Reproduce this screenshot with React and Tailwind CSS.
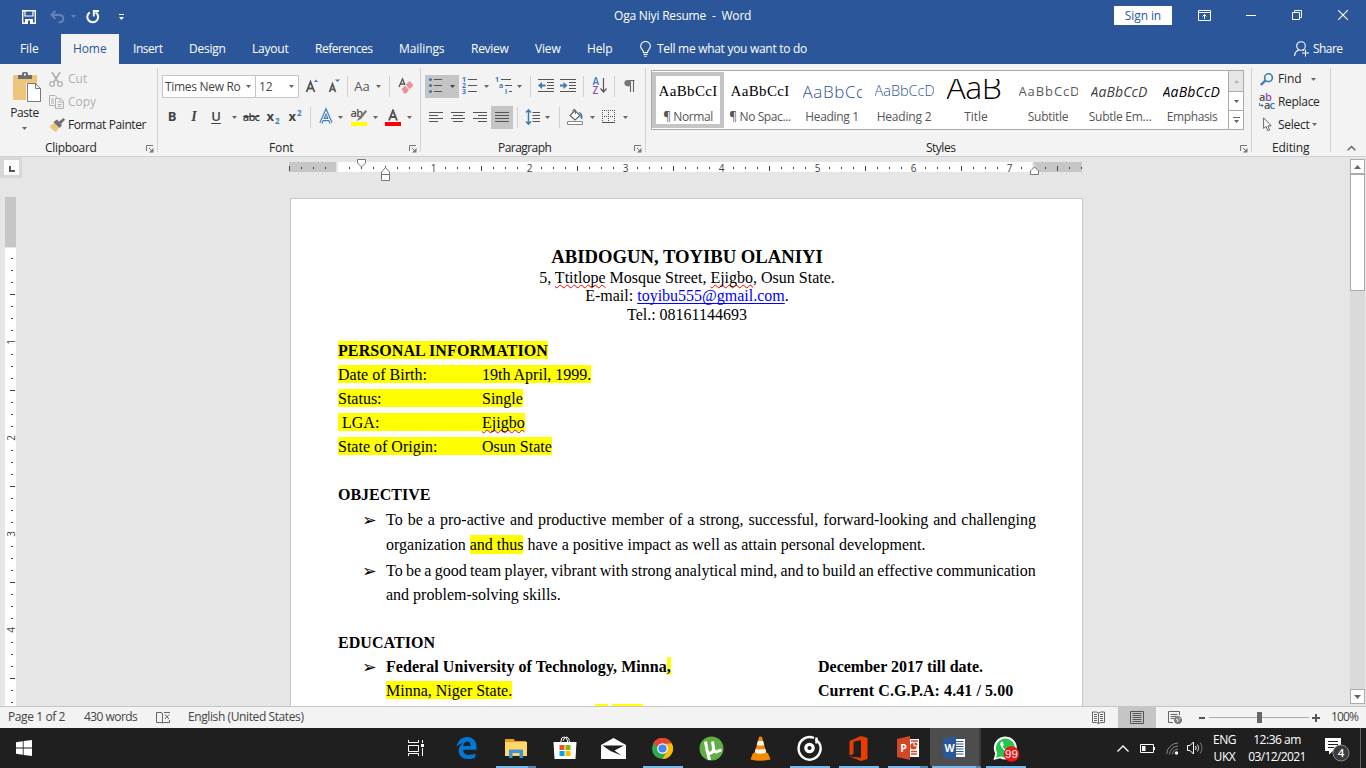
import React from "react";

const Caret = ({ c = "#666" }) => (
  <svg width="5" height="3" viewBox="0 0 5 3" className="shrink-0"><path d="M0 0H5L2.5 3Z" fill={c} /></svg>
);

const Cell = ({ className = "", children }) => (
  <div className={`flex h-full shrink-0 items-center justify-center whitespace-nowrap ${className}`}>{children}</div>
);

const Bar = ({ className }) => (
  <Cell className={className}><div className="h-[21px] w-px bg-[#d0d0d0]" /></Cell>
);

const Lines = ({ rows }) => (
  <svg width="14" height="23" className="shrink-0">
    {rows.map(([x, w], i) => <rect key={i} x={x} y={6 + i * 3} width={w} height="1" fill="#555" />)}
  </svg>
);

const Group = ({ label, className, labelClass, launcher, children }) => (
  <div className={`relative flex h-[84px] shrink-0 flex-col border-r border-[#d2d2d2] ${className}`}>
    {children}
    <div className="mt-auto flex h-[8px] items-center text-[#262626]">
      <span className={`whitespace-nowrap ${labelClass}`}>{label}</span>
    </div>
    {launcher && (
      <svg width="8" height="8" viewBox="0 0 8 8" className={`absolute -bottom-px ${launcher}`} fill="none">
        <path d="M.5 6V.5H7" stroke="#777" />
        <path d="M2.8 2.8L5.5 5.5" stroke="#777" />
        <path d="M7.5 3V7.5H3Z" fill="#777" />
      </svg>
    )}
  </div>
);

const TitleBar = () => (
  <div className="flex h-[34px] items-start text-white">
    <div className="flex h-8 w-[614px] items-center pl-[22px]">
      <svg width="14" height="14" viewBox="0 0 14 14" fill="none" stroke="#fff" strokeWidth="1.4" className="mt-[2px]">
        <path d="M.7.7H13.3V13.3H.7Z" /><path d="M3 1V6H11V1" strokeWidth="1.2" /><path d="M3 13.5V9H11V13.5" fill="#fff" stroke="none" /><path d="M6 10.5H8V14H6Z" fill="#2b579a" stroke="none" />
      </svg>
      <svg width="16" height="14" viewBox="0 0 16 14" fill="none" stroke="#6583b7" strokeWidth="2" className="ml-[14px] mt-[2px]">
        <path d="M5.5 1L1.5 5L5.5 9" /><path d="M2 5H9C12 5 13.3 6.7 13.3 9C13.3 11.3 11.5 12.4 8.5 12.4" />
      </svg>
      <div className="ml-[5px]"><Caret c="#6583b7" /></div>
      <svg width="14" height="14" viewBox="0 0 14 14" fill="none" stroke="#fff" strokeWidth="2" className="ml-[10px] mt-[2px]">
        <path d="M3.8 2.4A5.4 5.4 0 1 0 9.500 2.300" /><path d="M13 1H7.800V6.500" strokeWidth="1.900" />
      </svg>
      <svg width="5" height="7" viewBox="0 0 5 7" fill="#fff" className="ml-[19px] mt-[2px]"><path d="M0 0H5V1H0ZM0 3H5L2.5 6Z" /></svg>
    </div>
    <div className="h-8 w-[500px] whitespace-pre leading-[32px] tracking-[-0.19px]">Oga Niyi Resume  -  Word</div>
    <div className="mt-[6px] h-[19px] w-[58px] bg-white text-center leading-[19px] tracking-[-0.1px] text-[#2b579a]">Sign in</div>
    <svg width="13" height="11" viewBox="0 0 13 11" fill="none" stroke="#fff" className="ml-[26px] mt-[10px]">
      <path d="M.5.5H12.5V10.5H.5ZM.5 2.5H12.5M6.5 9V4.5M4.5 6.5L6.5 4.5L8.5 6.5" />
    </svg>
    <svg width="10" height="1" className="ml-[35px] mt-[15px]"><rect width="10" height="1" fill="#fff" /></svg>
    <svg width="10" height="10" viewBox="0 0 10 10" fill="none" stroke="#fff" className="ml-[36px] mt-[10px]"><path d="M.5 2.5H7.5V9.5H.5ZM2.5 2.5V.5H9.5V7.5H7.5" /></svg>
    <svg width="10" height="10" viewBox="0 0 10 10" fill="none" stroke="#fff" strokeWidth="1.1" className="ml-[36px] mt-[10px]"><path d="M0 0L10 10M10 0L0 10" /></svg>
  </div>
);

const TabRow = () => (
  <div className="flex h-[30px] items-center whitespace-nowrap leading-[30px] text-white">
    <div className="w-[61px] pl-[20px] tracking-[-0.12px]">File</div>
    <div className="h-full w-[58px] bg-[#f3f3f3] pl-[12px] tracking-[-0.1px] text-[#2b579a]">Home</div>
    <div className="w-[70px] pl-[14px] tracking-[-0.45px]">Insert</div>
    <div className="w-[63px] tracking-[-0.26px]">Design</div>
    <div className="w-[63px] tracking-[-0.22px]">Layout</div>
    <div className="w-[84px] tracking-[-0.46px]">References</div>
    <div className="w-[72px] tracking-[-0.08px]">Mailings</div>
    <div className="w-[64px] tracking-[-0.28px]">Review</div>
    <div className="w-[52px] tracking-[-0.18px]">View</div>
    <div className="w-[53px] tracking-[-0.11px]">Help</div>
    <svg width="11" height="16" viewBox="0 0 11 16" fill="none" stroke="#fff" strokeWidth="1.1">
      <path d="M3.5 11.5C3.5 8.5.6 8.2.6 5.2A4.9 4.7 0 0 1 10.4 5.2C10.4 8.2 7.5 8.5 7.5 11.5ZM3.5 13.4H7.5M4.3 15.3H6.7" />
    </svg>
    <div className="ml-[6px] w-[637px] tracking-[-0.29px]">Tell me what you want to do</div>
    <svg width="15" height="16" viewBox="0 0 15 16" fill="none" stroke="#fff" strokeWidth="1.1">
      <circle cx="7" cy="5" r="4.3" /><path d="M.6 15C.6 12 2.2 10 4.8 9M9 9L10 9.6M11.5 8.5V15.5M8 12H15" />
    </svg>
    <div className="ml-[4px] tracking-[-0.55px]">Share</div>
  </div>
);

const Clipboard = () => (
  <Group label="Clipboard" className="w-[158px]" labelClass="pl-[45px] tracking-[-0.33px]" launcher="left-[146px]">
    <div className="flex h-[68px]">
      <div className="flex w-[49px] flex-col items-center pt-[4px] text-[#262626]">
        <svg width="29" height="30" viewBox="0 0 29 30" className="ml-[5px]">
          <rect y="3" width="24" height="25" rx="1" fill="#ecc47c" />
          <path d="M5 3H9V1.5Q9 0 10.5 0H13.5Q15 0 15 1.5V3H19V7H5Z" fill="#6d6d6d" /><rect x="11" y="1.5" width="2" height="2" fill="#f3f3f3" />
          <path d="M13 11H22L29 17V30H13Z" fill="#f3f3f3" /><path d="M14.5 11.5H22.5L27.5 16.5V29.5H14.5ZM22.5 11.5V16.5H27.5" fill="#fff" stroke="#777" />
        </svg>
        <span className="mt-[3px] tracking-[-0.42px]">Paste</span>
        <div className="mt-[6px]"><Caret /></div>
      </div>
      <div className="flex flex-col whitespace-nowrap">
        <div className="flex h-[23px] items-center text-[#b1b1b1]">
          <svg width="14" height="15" viewBox="0 0 14 15" fill="none" stroke="#b1b1b1" strokeWidth="1.3"><path d="M3 0L9 10M11 0L5 10" strokeWidth="1.8" /><circle cx="3" cy="12" r="2.3" /><circle cx="11" cy="12" r="2.3" /></svg>
          <span className="ml-[5px]">Cut</span>
        </div>
        <div className="flex h-[23px] items-center text-[#b1b1b1]">
          <svg width="15" height="14" viewBox="0 0 15 14" fill="#f3f3f3" stroke="#b1b1b1"><path d="M.5.5H6L8.5 3V10.5H.5Z" /><path d="M2 4H5M2 6H5M2 8H5" /><path d="M6.5 3.5H11.5L14.5 6.5V13.5H6.5ZM11 3.5V7H14.5M8.5 7H10M8.5 9.5H12.5M8.5 11.5H12.5" /></svg>
          <span className="ml-[4px]">Copy</span>
        </div>
        <div className="flex h-[23px] items-center text-[#262626]">
          <svg width="16" height="14" viewBox="0 0 16 14"><path d="M.5 8.5L5.5 4.5L10 9.5L7 14Q3.5 12.5.5 8.5Z" fill="#ecc47c" /><path d="M4.5 4L8 1.5L13 7L10.5 10Z" fill="#6d6d6d" /><path d="M9.5 4L14.5 0L16 1.8L12 6Z" fill="#6d6d6d" /></svg>
          <span className="ml-[3px] tracking-[-0.4px]">Format Painter</span>
        </div>
      </div>
    </div>
  </Group>
);

const Font = () => (
  <Group label="Font" className="w-[263px]" labelClass="pl-[111px] tracking-[-0.14px]" launcher="left-[251px]">
    <div className="mt-[7px] flex h-[23px] items-center pl-[4px] text-[#444]">
      <div className="flex h-[23px] w-[94px] items-center justify-between whitespace-nowrap border border-[#c6c6c6] bg-white pl-[2px] pr-[4px]"><span className="tracking-[-0.3px]">Times New Ro</span><Caret /></div>
      <div className="flex h-[23px] w-[43px] items-center justify-between border border-l-0 border-[#c6c6c6] bg-white pl-[3px] pr-[4px]"><span>12</span><Caret /></div>
      <Cell className="w-[24px]"><svg width="24" height="23"><path d="M7.5 17L11.5 7L15.5 17M9 13.5H14" stroke="#555" strokeWidth="1.8" fill="none" /><path d="M15 7H19L17 4.5Z" fill="#3f7ab5" /></svg></Cell>
      <Cell className="w-[22px]"><svg width="22" height="23"><path d="M6.5 17L9.5 9L12.5 17M7.5 14.5H11.5" stroke="#555" strokeWidth="1.7" fill="none" /><path d="M12 4.5H17L14.5 7Z" fill="#3f7ab5" /></svg></Cell>
      <Bar className="w-[5px]" />
      <Cell className="w-[24px] pb-[2px] text-[13px] text-[#555]">Aa</Cell>
      <Cell className="w-[8px]"><Caret /></Cell>
      <Bar className="w-[15px]" />
      <Cell className="w-[17px]"><svg width="17" height="23"><path d="M2 12L5.5 4L8 10M3.5 9H7" stroke="#555" strokeWidth="1.3" fill="none" /><path d="M4.5 14L8 10.5L12 15L9 18.5H7Z" fill="#e8919f" /><path d="M8.7 9.8L12.5 6L16 9.5V11L12.6 14.3Z" fill="#e8919f" /></svg></Cell>
    </div>
    <div className="mt-[8px] flex h-[23px] items-center pl-[3px] text-[#444]">
      <Cell className="w-[22px] pb-[3px] text-[13px] font-bold">B</Cell>
      <Cell className="w-[22px] pb-[2px] font-['Liberation_Serif'] text-[14px] font-bold italic">I</Cell>
      <Cell className="w-[22px] pb-[3px] text-[13px] font-semibold underline underline-offset-2">U</Cell>
      <Cell className="w-[14px]"><Caret /></Cell>
      <Cell className="w-[20px] pb-[2px] text-[11px] font-semibold tracking-[-0.8px] line-through">abc</Cell>
      <Cell className="w-[24px] pb-[3px] text-[13px] font-bold"><span>x</span><span className="ml-px mt-[9px] text-[8px] text-[#3f7ab5]">2</span></Cell>
      <Cell className="w-[20px] pb-[3px] text-[13px] font-bold"><span>x</span><span className="mb-[6px] ml-px text-[8px] text-[#3f7ab5]">2</span></Cell>
      <Bar className="w-[11px]" />
      <Cell className="w-[20px]"><svg width="20" height="23"><path d="M5 17L10 5.5L15 17M7 13.5H13" stroke="#9cc0e4" strokeWidth="4" fill="none" /><path d="M5 17L10 5.5L15 17M7 13.5H13" stroke="#3f7ab5" strokeWidth="2.8" fill="none" /><path d="M5 17L10 5.5L15 17M7 13.5H13" stroke="#fff" strokeWidth="1" fill="none" /></svg></Cell>
      <Cell className="w-[8px]"><Caret /></Cell>
      <Cell className="w-[29px]">
        <div className="flex h-[17px] w-[16px] flex-col">
          <svg width="16" height="13" className="overflow-visible"><text x="-.5" y="8" fontSize="11" fontWeight="600" letterSpacing="-.6" fill="#555">ab</text><path d="M14.5 1L8 8.5L5.5 12L10 10L16 2.5Z" fill="#777" /></svg>
          <div className="h-[4px] bg-[#ff0]" />
        </div>
      </Cell>
      <Cell className="w-[5px]"><Caret /></Cell>
      <Cell className="w-[29px]">
        <div className="flex h-[17px] w-[16px] flex-col">
          <svg width="16" height="13"><path d="M4 11.5L8 1.5L12 11.500M5.500 8H10.500" stroke="#555" strokeWidth="1.9" fill="none" /></svg>
          <div className="h-[4px] bg-[#f00]" />
        </div>
      </Cell>
      <Cell className="w-[5px]"><Caret /></Cell>
    </div>
  </Group>
);

const Paragraph = () => (
  <Group label="Paragraph" className="w-[225px]" labelClass="pl-[77px] tracking-[-0.55px]" launcher="left-[213px]">
    <div className="mt-[7px] flex h-[23px] items-center pl-[4px]">
      <div className="flex h-[23px] w-[34px] bg-[#c5c5c5]">
        <svg width="20" height="23" fill="#3f7ab5"><circle cx="5.5" cy="4.5" r="1.6" /><circle cx="5.5" cy="10.5" r="1.6" /><circle cx="5.5" cy="16.5" r="1.6" /><path d="M9 4H17V5H9ZM9 10H17V11H9ZM9 16H17V17H9Z" fill="#555" /></svg>
        <Cell className="w-[14px]"><Caret c="#444" /></Cell>
      </div>
      <svg width="21" height="23" className="shrink-0" fill="#3f7ab5" fontSize="7" fontWeight="bold"><text x="3" y="7">1</text><text x="3" y="13">2</text><text x="3" y="19">3</text><path d="M9 4H18V5H9ZM9 10H18V11H9ZM9 16H18V17H9Z" fill="#555" /></svg>
      <Cell className="w-[12px]"><Caret /></Cell>
      <svg width="23" height="23" className="shrink-0" fill="#3f7ab5" fontSize="7" fontWeight="bold"><text x="3" y="7">1</text><text x="7" y="13">a</text><text x="13" y="19">i</text><path d="M9 4H19V5H9ZM13 10H20V11H13ZM17 16H20V17H17Z" fill="#555" /></svg>
      <Cell className="w-[8px]"><Caret /></Cell>
      <Bar className="w-[14px]" />
      <svg width="20" height="23" className="shrink-0" fill="#555"><path d="M1 4H17V5H1ZM10 7H17V8H10ZM10 10H17V11H10ZM10 13H17V14H10ZM1 16H17V17H1Z" /><path d="M1 10.5L5 7V9.5H8.5V11.5H5V14Z" fill="#3f7ab5" /></svg>
      <svg width="24" height="23" className="shrink-0" fill="#555"><path d="M3 4H19V5H3ZM12 7H19V8H12ZM12 10H19V11H12ZM12 13H19V14H12ZM3 16H19V17H3Z" /><path d="M10.5 10.5L6.5 7V9.5H3V11.5H6.5V14Z" fill="#3f7ab5" /></svg>
      <Bar className="w-[5px]" />
      <svg width="27" height="23" className="shrink-0" fill="none"><text x="6.5" y="10" fontSize="10" fontWeight="600" fill="#3f7ab5">A</text><text x="6.5" y="19" fontSize="10" fontWeight="600" fill="#8a4fb0">Z</text><path d="M17.5 3V17M14.5 13.5L17.5 17L20.5 13.5" stroke="#555" strokeWidth="1.2" /></svg>
      <Bar className="w-[3px]" />
      <svg width="27" height="23" className="shrink-0"><path d="M17.500 5V17M14.500 5V17M11.500 5.500H18.500" stroke="#666" strokeWidth="1.100" /><path d="M15 5H11.500A3.100 3.100 0 0 0 11.500 11.200H15Z" fill="#777" /></svg>
    </div>
    <div className="mt-[8px] flex h-[23px] items-center pl-[4px]">
      <Cell className="w-[22px]"><Lines rows={[[0, 14], [0, 9], [0, 14], [0, 9]]} /></Cell>
      <Cell className="w-[22px]"><Lines rows={[[0, 14], [2, 10], [0, 14], [2, 10]]} /></Cell>
      <Cell className="w-[22px]"><Lines rows={[[0, 14], [5, 9], [0, 14], [5, 9]]} /></Cell>
      <Cell className="w-[22px] bg-[#c5c5c5]"><Lines rows={[[0, 14], [0, 14], [0, 14], [0, 14]]} /></Cell>
      <Bar className="w-[9px]" />
      <svg width="22" height="23" className="shrink-0" fill="none"><path d="M6.5 4V18M4 6.5L6.5 3.8L9 6.5M4 15.5L6.5 18.2L9 15.5" stroke="#3f7ab5" strokeWidth="1.5" /><path d="M10.5 6.5H18M10.5 9.5H18M10.5 12.5H18M10.5 15.5H18" stroke="#555" /></svg>
      <Cell className="w-[7px]"><Caret /></Cell>
      <Bar className="w-[16px]" />
      <svg width="17" height="23" className="shrink-0" fill="none"><path d="M3 9.5L8 4.5L13 9.5L8 14Z" fill="#fff" stroke="#666" strokeWidth="1.2" /><path d="M6 7V4Q7 2.5 8.5 4V8" stroke="#666" /><path d="M11.5 6Q16 6.5 15.5 12Q14.5 14 13.5 12V9Z" fill="#3f7ab5" /><path d="M.5 15.5H15.5V18.5H.5Z" fill="#fff" stroke="#888" /></svg>
      <Cell className="w-[16px]"><Caret /></Cell>
      <svg width="17" height="23" className="shrink-0" fill="none" stroke="#555"><path d="M2 4.5H15M2.5 4V16M8.5 4V16M14.5 4V16M2 10.5H15" strokeDasharray="1 1" /><path d="M2 16.5H15" /></svg>
      <Cell className="w-[17px]"><Caret /></Cell>
    </div>
  </Group>
);

const styles = [
  ["¶ Normal", "font-['Liberation_Serif'] text-[15px] text-black tracking-[0.35px]", "tracking-[-0.43px]"],
  ["¶ No Spac...", "font-['Liberation_Serif'] text-[15px] text-black tracking-[0.35px]", "tracking-[-0.4px]"],
  ["Heading 1", "text-[17px] font-light text-[#2f5496] tracking-[0.6px]", "tracking-[-0.33px]", "AaBbCc"],
  ["Heading 2", "text-[14.5px] font-light text-[#2f5496]", "tracking-[-0.2px]", "AaBbCcD"],
  ["Title", "mb-[10px] text-[32px] font-light text-black tracking-[-0.4px]", "", "AaB"],
  ["Subtitle", "text-[13px] text-[#5a5a5a] tracking-[0.9px]", "tracking-[-0.27px]", "AaBbCcD"],
  ["Subtle Em...", "text-[14px] italic text-[#404040] tracking-[0.1px]", "tracking-[-0.26px]", "AaBbCcD"],
  ["Emphasis", "text-[14px] italic text-black tracking-[0.2px]", "tracking-[-0.39px]", "AaBbCcD"],
];

const Styles = () => (
  <Group label="Styles" className="w-[606px]" labelClass="pl-[280px] tracking-[-0.5px]" launcher="left-[594px]">
    <div className="ml-[5px] mt-[2px] flex h-[60px] w-[593px] border border-[#ababab] bg-white">
      {styles.map(([name, cls, track, sample = "AaBbCcI"], i) => (
        <div key={name} className={`flex h-[56px] w-[72px] shrink-0 flex-col items-center self-center border-4 ${i ? "border-transparent" : "border-[#c5c5c5]"}`}>
          <div className="mt-[3px] flex h-[23px] w-[59px] shrink-0 items-center overflow-hidden pt-[2px]">
            <span className={`whitespace-nowrap leading-none ${cls}`}>{sample}</span>
          </div>
          <span className={`mt-[8px] whitespace-nowrap leading-[14px] text-[#555] ${track}`}>{name}</span>
        </div>
      ))}
      <div className="flex w-[15px] flex-col border-l border-[#ababab]">
        <div className="flex h-[20px] items-center justify-center bg-[#e6e6e6]"><svg width="5" height="3"><path d="M0 3H5L2.5 0Z" fill="#b5b5b5" /></svg></div>
        <div className="flex h-[20px] items-center justify-center border-y border-[#ababab]"><Caret /></div>
        <div className="flex h-[18px] items-center justify-center"><svg width="7" height="6"><path d="M0 0H7V1H0ZM1 3H6L3.5 6Z" fill="#666" /></svg></div>
      </div>
    </div>
  </Group>
);

const Editing = () => (
  <Group label="Editing" className="w-[79px]" labelClass="pl-[20px] tracking-[-0.12px]">
    <div className="flex h-[68px] flex-col text-[#262626]">
      <div className="flex h-[23px] items-center pl-[8px]">
        <svg width="14" height="13" viewBox="0 0 14 13" fill="none" stroke="#3f7ab5"><circle cx="8.5" cy="4.7" r="3.9" strokeWidth="1.6" /><path d="M5.5 7.5L.8 12" strokeWidth="2.4" /></svg>
        <span className="ml-[4px] mr-[10px] tracking-[-0.11px]">Find</span><Caret />
      </div>
      <div className="flex h-[23px] items-center pl-[7px]">
        <svg width="16" height="16" className="overflow-visible" fontSize="11" fontWeight="600" letterSpacing="-.5"><text x="0" y="7" fill="#555">a</text><text x="6" y="7" fill="#8a4fb0">b</text><text x="5" y="14.5" fill="#555">a</text><text x="10.5" y="14.5" fill="#3f7ab5">c</text><path d="M.5 9V11.5H4M2.5 10L4 11.5L2.5 13" fill="none" stroke="#3f7ab5" /></svg>
        <span className="ml-[3px] tracking-[-0.31px]">Replace</span>
      </div>
      <div className="flex h-[23px] items-center pl-[11px]">
        <svg width="9" height="15" viewBox="0 0 9 15" fill="#fff" stroke="#666"><path d="M.6.8V11.5L3 9.3L4.8 13.7L6.6 13L4.9 8.8H8.2Z" /></svg>
        <span className="ml-[6px] mr-[2px] tracking-[-0.27px]">Select</span><Caret />
      </div>
    </div>
  </Group>
);

const hTicks = Array.from({ length: 67 }, (_, i) => i - 4);

const HorizontalRuler = () => (
  <svg width="794" height="24" className="ml-[267px]" fontSize="10" textAnchor="middle" fill="#444">
    <rect x="0" y="5" width="47" height="10" fill="#c6c6c6" />
    <rect x="49" y="5" width="694" height="10" fill="#fff" />
    <rect x="745" y="5" width="48" height="10" fill="#c6c6c6" />
    {hTicks.map((i) => {
      const x = 48 + i * 12;
      if (i === 0 || i === 58 || x > 793) return null;
      if (i > 0 && i % 8 === 0) return <text key={i} x={x + 0.5} y="14.500">{i / 8}</text>;
      return i % 4 === 0 ? <rect key={i} x={x} y="9" width="1" height="5" /> : <rect key={i} x={x} y="10" width="1" height="2" />;
    })}
    <g fill="#fff" stroke="#777">
      <path d="M68.500 2.500H76.500V6L72.500 10L68.500 6Z" />
      <path d="M92.500 23.500V15L96.500 10.500L100.500 15V23.500ZM92.500 17.500H100.500" />
      <path d="M741.500 17.500V14L745.500 10L749.500 14V17.500Z" />
    </g>
  </svg>
);

const vTicks = Array.from({ length: 38 }, (_, i) => i + 1);

const VerticalRuler = () => (
  <svg width="11" height="509" className="ml-[5px] shrink-0" fontSize="10" textAnchor="middle" fill="#444">
    <rect width="11" height="50" fill="#c6c6c6" />
    <rect y="51" width="11" height="458" fill="#fff" />
    {vTicks.map((i) => {
      const y = 49 + i * 12;
      if (i % 8 === 0) return <text key={i} transform={`translate(10 ${y}) rotate(-90)`}>{i / 8}</text>;
      return i % 4 === 0 ? <rect key={i} x="5" y={y} width="5" height="1" /> : <rect key={i} x="6" y={y} width="2" height="1" />;
    })}
  </svg>
);

const Hl = ({ children, className = "" }) => <span className={`bg-[#ff0] pt-px ${className}`}>{children}</span>;
const Sp = ({ children }) => <span className="underline decoration-[#f00] decoration-wavy decoration-[1px] underline-offset-[1px] [text-decoration-skip-ink:none]">{children}</span>;
const Info = ({ k, children }) => (
  <div><Hl className="inline-block w-[144px] whitespace-pre leading-[17px]">{k}</Hl><Hl className="inline-block leading-[17px]">{children}</Hl></div>
);
const Arrow = ({ className = "" }) => <span className={`w-[48px] shrink-0 pl-[24px] font-['DejaVu_Sans'] text-[17.500px] ${className}`}>➢</span>;

const Page = () => (
  <div className="mt-[18px] h-[520px] w-[793px] overflow-hidden border border-b-0 border-[#c6c6c6] bg-white pl-[47px] pt-[47px] font-['Liberation_Serif'] text-[16px] leading-[24px] text-black">
    <div className="w-[698px] whitespace-nowrap">
      <div className="h-[23px] text-center text-[18.67px] font-bold leading-[22px]">ABIDOGUN, TOYIBU OLANIYI</div>
      <div className="text-center leading-[18px]">5, <Sp>Ttitlope</Sp> Mosque Street, <Sp>Ejigbo</Sp>, Osun State.</div>
      <div className="text-center leading-[18px]">E-mail: <span className="text-[#00f] underline underline-offset-2 [text-decoration-skip-ink:none]">toyibu555@gmail.com</span>.</div>
      <div className="mt-px text-center leading-[18px]">Tel.: 08161144693</div>
      <div className="mt-[15px] font-bold tracking-[0.09px]"><Hl>PERSONAL INFORMATION</Hl></div>
      <Info k="Date of Birth:">19th April, 1999.</Info>
      <Info k="Status:">Single</Info>
      <Info k=" LGA:"><Sp>Ejigbo</Sp></Info>
      <Info k="State of Origin:">Osun State</Info>
      <div className="mt-[24px] font-bold">OBJECTIVE</div>
      <div className="mt-px flex"><Arrow /><div className="w-[650px] [text-align-last:justify]">To be a pro-active and productive member of a strong, successful, forward-looking and challenging</div></div>
      <div className="mt-px pl-[48px]">organization <Hl className="pb-px">and thus</Hl> have a positive impact as well as attain personal development.</div>
      <div className="mt-[2px] flex"><Arrow /><div className="w-[650px] [word-spacing:-0.7px]">To be a good team player, vibrant with strong analytical mind, and to build an effective communication</div></div>
      <div className="pl-[48px]">and problem-solving skills.</div>
      <div className="mt-[24px] font-bold tracking-[0.05px]">EDUCATION</div>
      <div className="flex font-bold"><Arrow className="font-normal" /><div className="w-[432px] tracking-[0.055px]">Federal University of Technology, Minna<Hl>,</Hl></div><div>December 2017 till date.</div></div>
      <div className="flex pl-[48px]"><div className="w-[432px]"><Hl>Minna, Niger State.</Hl></div><div className="font-bold tracking-[0.07px]">Current C.G.P.A: 4.41 / 5.00</div></div>
      <div className="flex gap-[4px] pl-[257px] pt-px"><div className="h-[18px] w-[13px] bg-[#ff0]" /><div className="h-[18px] w-[31px] bg-[#ff0]" /></div>
    </div>
  </div>
);

const Workspace = () => (
  <div className="flex h-[549px] bg-[#e6e6e6]">
    <div className="flex w-[22px] shrink-0 flex-col">
      <div className="flex h-[21px] w-[22px] items-center justify-center bg-[#d8d8d8]">
        <div className="h-[15px] w-[15px] bg-[#fdfdfd] pl-[5px] pt-[6px]"><div className="h-[6px] w-[6px] border-b-2 border-l-2 border-[#555]" /></div>
      </div>
      <div className="mt-[19px]"><VerticalRuler /></div>
    </div>
    <div className="flex w-[1328px] flex-col overflow-hidden">
      <div className="h-[23px] shrink-0"><HorizontalRuler /></div>
      <div className="ml-[268px]"><Page /></div>
    </div>
    <div className="flex w-[15px] flex-col py-[2px]">
      <Cell className="h-[15px]! w-[15px] border border-[#ababab] bg-white"><svg width="7" height="4"><path d="M0 4H7L3.500 0Z" fill="#666" /></svg></Cell>
      <div className="h-[117px] border border-[#ababab] bg-white" />
      <div className="grow bg-[#dadada]" />
      <Cell className="h-[15px]! w-[15px] border border-[#ababab] bg-white"><svg width="7" height="4"><path d="M0 0H7L3.500 4Z" fill="#666" /></svg></Cell>
    </div>
  </div>
);

const StatusBar = () => (
  <div className="flex h-[22px] items-center whitespace-nowrap border-t border-[#c6c6c6] bg-[#f3f3f3] text-[#444]">
    <div className="w-[76px] pl-[8px] pb-[2px] tracking-[-0.4px]">Page 1 of 2</div>
    <div className="ml-[8px] w-[72px] pb-[2px] tracking-[-0.55px]">430 words</div>
    <svg width="15" height="13" viewBox="0 0 15 13" fill="none" stroke="#666"><path d="M8 1.500H14M.5 1.500H5Q6.500 1.500 6.500 3V12Q6 11.500 5 11.500H.5ZM6.500 12Q7 11.500 9 11.500H13.500V9M9 3.500L13 8M13 3.500L9 8" /></svg>
    <div className="ml-[17px] w-[904px] pb-[2px] tracking-[-0.4px]">English (United States)</div>
    <svg width="13" height="13" viewBox="0 0 13 13" fill="none" stroke="#666"><path d="M6.500 2V12.500M6.500 2Q5 .5 .5 1V11.500Q5 11 6.500 12.500Q8 11 12.500 11.500V1Q8 .5 6.500 2M2 3.500H5M2 5.500H5M2 7.500H5M2 9.500H5M8 3.500H11M8 5.500H11M8 7.500H11M8 9.500H11" /></svg>
    <div className="ml-[13px] flex h-full w-[38px] items-center justify-center bg-[#c5c5c5]"><svg width="14" height="13" fill="none" stroke="#555"><path d="M.5.5H13.500V12.500H.5ZM2.500 2.500H11.500M2.500 4.500H11.500M2.500 6.500H11.500M2.500 8.500H11.500M2.500 10.500H11.500" /></svg></div>
    <svg width="14" height="13" viewBox="0 0 14 13" fill="none" stroke="#666" className="ml-[12px]"><path d="M11.500 4V.5H.5V11.500H5M2.500 3.500H9.500M2.500 5.500H8M2.500 7.500H6" /><circle cx="10" cy="9" r="3.500" fill="#888" /><path d="M8 8L10 9L9.500 11M11 6.500L12.500 8" stroke="#f3f3f3" /></svg>
    <div className="ml-[17px] h-[2px] w-[6px] bg-[#555]" />
    <div className="ml-[4px] flex h-full w-[100px] items-center">
      <div className="h-px w-[48px] bg-[#ababab]" /><div className="h-[11px] w-[5px] bg-[#666]" /><div className="h-px grow bg-[#ababab]" />
    </div>
    <svg width="8" height="8" className="ml-[3px]"><path d="M4 0V8M0 4H8" stroke="#555" strokeWidth="2" /></svg>
    <div className="ml-[11px] pb-[2px] tracking-[-0.9px]">100%</div>
  </div>
);

const Task = ({ active, bar, children }) => (
  <div className={`flex h-[40px] w-[49px] shrink-0 flex-col items-center ${active ? "bg-[#3a3a3a]" : ""}`}>
    <div className={`flex h-[38px] w-full items-center justify-center pt-[2px] ${active ? "mr-[5px] w-[44px] bg-[#4d4d4d]" : ""}`}>{children}</div>
    <div className="flex h-[2px]">
      {bar && <div className={`h-[2px] bg-[#76b9ed] ${bar === "multi" ? "w-[32px]" : active ? "w-[44px]" : "w-[40px]"}`} />}
      {(bar === "multi" || active) && <div className={`h-[2px] bg-[#5586ad] ${active ? "w-[5px]" : "w-[8px]"}`} />}
    </div>
  </div>
);

const OfficeDoc = ({ color, letter, children }) => (
  <svg width="24" height="24" viewBox="0 0 24 24">
    <path d="M12 3H23V21H12Z" fill="#fff" />{children}
    <path d="M1 3L14 0V24L1 21Z" fill={color} />
    <text x="7.5" y="15.800" fontSize="10.500" fontWeight="700" textAnchor="middle" fill="#fff">{letter}</text>
  </svg>
);

const Taskbar = () => (
  <div className="flex h-[40px] bg-[#1f1f1f] text-white">
    <div className="flex w-[392px] items-center pl-[16px]">
      <svg width="16" height="16" fill="#fff"><path d="M0 2.200L6.800 1.200V7.500H0ZM7.600 1.100L16 0V7.500H7.600ZM0 8.500H6.800V14.800L0 13.800ZM7.600 8.500H16V16L7.600 14.900Z" /></svg>
    </div>
    <div className="flex w-[50px] items-center pl-[16px]">
      <svg width="16" height="16" fill="none" stroke="#fff"><path d="M.5 0V2.500H10.500V0M.5 5.500H10.500V11.500H.5ZM.5 16V13.500H10.500V16M14.500 0V3M14.500 8V16" /><rect x="13" y="4" width="3" height="3" fill="#fff" stroke="none" /></svg>
    </div>
    <Task><svg width="21" height="22" viewBox="0 0 21 22"><path d="M.5 10C1.500 3.500 6 0 11 0C17 0 20.500 4.500 20.500 10V12.800H7C7.200 16.500 10 18 13 18C15.500 18 17.500 17.300 19.300 16.300V20.500C17 21.600 14.700 22 12.300 22C6.500 22 2.600 18.700 2.600 13.500C2.600 10.300 4.300 7.600 7.300 6.200C5 6.200 2.300 7.300.5 10ZM7.200 8.900H14.700C14.700 6.200 13.500 4.600 11.300 4.600C9 4.600 7.600 6.300 7.200 8.900Z" fill="#0078d7" fillRule="evenodd" /></svg></Task>
    <Task bar="multi"><svg width="22" height="20" viewBox="0 0 22 20"><path d="M0 1H9L10 3H21V18H0Z" fill="#e6a117" /><path d="M0 4H22V18H0Z" fill="#ffd766" /><path d="M4 11.500H18V20H14.500V15H7.500V20H4Z" fill="#3d92d8" /></svg></Task>
    <Task><svg width="24" height="24" viewBox="0 0 24 24" fill="none"><path d="M8 8V5Q8 1 11 1Q14 1 14.500 5V8M10 5Q11 1 14 1Q16.500 2 16.500 7" stroke="#fff" /><path d="M.5 6H23.500L22.500 23H1.500Z" fill="#fff" /><path d="M6.500 9H11.500V14H6.500Z" fill="#f25022" /><path d="M12.500 9H17.500V14H12.500Z" fill="#7fba00" /><path d="M6.500 15H11.500V20H6.500Z" fill="#00a4ef" /><path d="M12.500 15H17.500V20H12.500Z" fill="#ffb900" /></svg></Task>
    <Task><svg width="25" height="21" viewBox="0 0 25 21"><path d="M0 7L12.500 0L25 7V21H0Z" fill="#fff" /><path d="M1.500 7.500H23L13.500 12.500L20.500 17.500L9.500 13Z" fill="#1f1f1f" /></svg></Task>
    <Task bar><svg width="23" height="23" viewBox="0 0 48 48"><circle cx="24" cy="24" r="22" fill="#34a853" /><path d="M24 24L4.900 13A22 22 0 0 1 43.100 13H24Z" fill="#ea4335" /><path d="M4.900 13L15 30L24 34L24 24Z" fill="#34a853" /><path d="M43.100 13A22 22 0 0 1 24 46L33.500 29L30 14Z" fill="#fbbc05" /><path d="M4.900 13A22 22 0 0 1 43.100 13H24A11 11 0 0 0 14 20Z" fill="#ea4335" /><circle cx="24" cy="24" r="11" fill="#fff" /><circle cx="24" cy="24" r="8.500" fill="#4285f4" /></svg></Task>
    <Task><svg width="25" height="25" viewBox="0 0 25 25" fill="none"><circle cx="12.500" cy="12.500" r="12" fill="#63ad45" /><path d="M6.500 5.500L8 14.500Q9 18 12 17Q15 15.500 14.500 12L13.500 5.500M14.800 13Q15.800 17 18.500 15.500Q20 14.500 22.500 14M8 14L10.500 24" stroke="#fff" strokeWidth="3" /></svg></Task>
    <Task><svg width="21" height="25" viewBox="0 0 21 25"><path d="M3 17H18L20.500 23.500Q10.500 26 .5 23.500Z" fill="#f38b00" /><path d="M9 1Q10.500 0 12 1L17 19Q10.500 22 4 19Z" fill="#f38b00" /><path d="M7.900 5H13.100L14.200 9Q10.500 10.500 6.800 9ZM5.700 12.700Q10.500 14.500 15.300 12.700L16.300 16.500Q10.500 19 4.700 16.500Z" fill="#f3f3f3" /></svg></Task>
    <Task bar><svg width="25" height="26" viewBox="0 0 25 26" fill="none" stroke="#fff"><path d="M17 3A11 11.300 0 1 0 22 7.500" strokeWidth="2.400" /><circle cx="12.500" cy="13" r="3.700" strokeWidth="3.200" /><path d="M19.500 2.500V8.500" strokeWidth="2.400" /><path d="M18.500 4L22.500 8" strokeWidth="2" /></svg></Task>
    <Task bar><svg width="19" height="25" viewBox="0 0 19 25"><path d="M12 0L18.500 2V23L12 25L.5 20.500L12 21.800V4L4.500 5.800V18L.5 19.800V5Z" fill="#eb3c00" /></svg></Task>
    <Task bar="multi"><OfficeDoc color="#d24726" letter="P"><path d="M15 5H22M15 15.500H21M15 18H21" stroke="#d24726" strokeWidth="1.300" /><path d="M17.500 7A3.200 3.200 0 1 0 20.700 10.200H17.500Z" fill="#d24726" /><path d="M18.500 6.200A3 3 0 0 1 21.500 9.200H18.500Z" fill="#d24726" /></OfficeDoc></Task>
    <Task bar active><OfficeDoc color="#2b579a" letter="W"><path d="M14 5.500H21.500M14 8H21.500M14 10.500H21.500M14 13H21.500M14 15.500H21.500M14 18H21.500" stroke="#2b579a" strokeWidth="1.200" /></OfficeDoc></Task>
    <Task bar>
      <svg width="25" height="27" viewBox="0 0 25 27" className="overflow-visible"><path d="M.5 25L2.200 18.500A11.500 11.500 0 1 1 7 23.200Z" fill="#fff" /><path d="M3 22.800L4.300 18A9.500 9.500 0 1 1 8 21.500Z" fill="#25c64f" /><path d="M8.500 6.500Q7 7.500 7.200 9.500Q9.500 15.500 15 17.500Q17.500 17.500 18 15L15 13.500L13.500 15Q11 14 9.800 11.500L10.800 10L9.800 6.800Z" fill="#fff" /><circle cx="18.500" cy="19" r="7.800" fill="#f01414" /><text x="18.500" y="23" fontSize="11.500" fontFamily="Liberation Sans" textAnchor="middle" fill="#fff">99</text></svg>
    </Task>
    <div className="flex h-full items-center whitespace-nowrap pl-[87px]">
      <svg width="12" height="7" fill="none"><path d="M.5 6.500L6 1L11.500 6.500" stroke="#fff" strokeWidth="1.300" /></svg>
      <svg width="15" height="9" fill="none" className="ml-[11px]"><path d="M.5.5H13.500V8.500H.5Z" stroke="#fff" /><path d="M14 3H15V6H14Z" fill="#fff" /><path d="M2 2H5.500V7H2Z" fill="#fff" /></svg>
      <svg width="13" height="13" fill="none" stroke="#888" className="ml-[11px]"><path d="M.7 12A11.500 11.500 0 0 1 12 1M3.500 12.500A9 9 0 0 1 12 4M6.500 12.500A6 6 0 0 1 12 7" /><circle cx="10.500" cy="11" r="1.700" fill="#fff" stroke="none" /></svg>
      <svg width="17" height="14" fill="none" stroke="#fff" className="ml-[8px]"><path d="M.5 4.500H3L6.500 1V13L3 9.500H.5Z" /><path d="M8.500 5Q9.800 7 8.500 9" /><path d="M10.500 3.500Q13 7 10.500 10.500" stroke="#ccc" /><path d="M13 1.500Q17 7 13 12.500" stroke="#777" /></svg>
      <div className="ml-[8px] flex w-[25px] flex-col items-center leading-[17px] tracking-[-0.4px]"><span>ENG</span><span>UKX</span></div>
      <div className="ml-[9px] flex w-[62px] flex-col items-center leading-[17px]"><span className="tracking-[-0.5px]">12:36 am</span><span className="tracking-[-0.62px]">03/12/2021</span></div>
      <svg width="25" height="26" className="ml-[17px] mt-[4px]"><path d="M0 1H16V14H8L4 17.500V14H0Z" fill="#fff" /><path d="M3 4.500H13M3 7.500H13M3 10.500H9" stroke="#1f1f1f" /><circle cx="16" cy="16" r="8" fill="#3b3b3b" stroke="#888" /><text x="16" y="20" fontSize="11.500" fontWeight="600" textAnchor="middle" fill="#fff">4</text></svg>
      <div className="ml-[10px] h-full w-px bg-[#666]" />
    </div>
  </div>
);

export default function App() {
  return (
    <div className="flex h-[768px] w-[1366px] flex-col overflow-hidden bg-[#2b579a] font-['Open_Sans','Noto_Sans',sans-serif] text-[12px] leading-[16px]">
      <TitleBar />
      <TabRow />
      <div className="flex h-[93px] border-b border-[#d0d0d0] bg-[#f3f3f3] pt-[4px]">
        <Clipboard /><Font /><Paragraph /><Styles /><Editing />
        <div className="flex grow items-end pb-[5px] pl-[16px]">
          <svg width="9" height="6" fill="none"><path d="M.7 5.300L4.500 1.500L8.300 5.300" stroke="#666" strokeWidth="1.500" /></svg>
        </div>
      </div>
      <Workspace />
      <StatusBar />
      <Taskbar />
    </div>
  );
}
